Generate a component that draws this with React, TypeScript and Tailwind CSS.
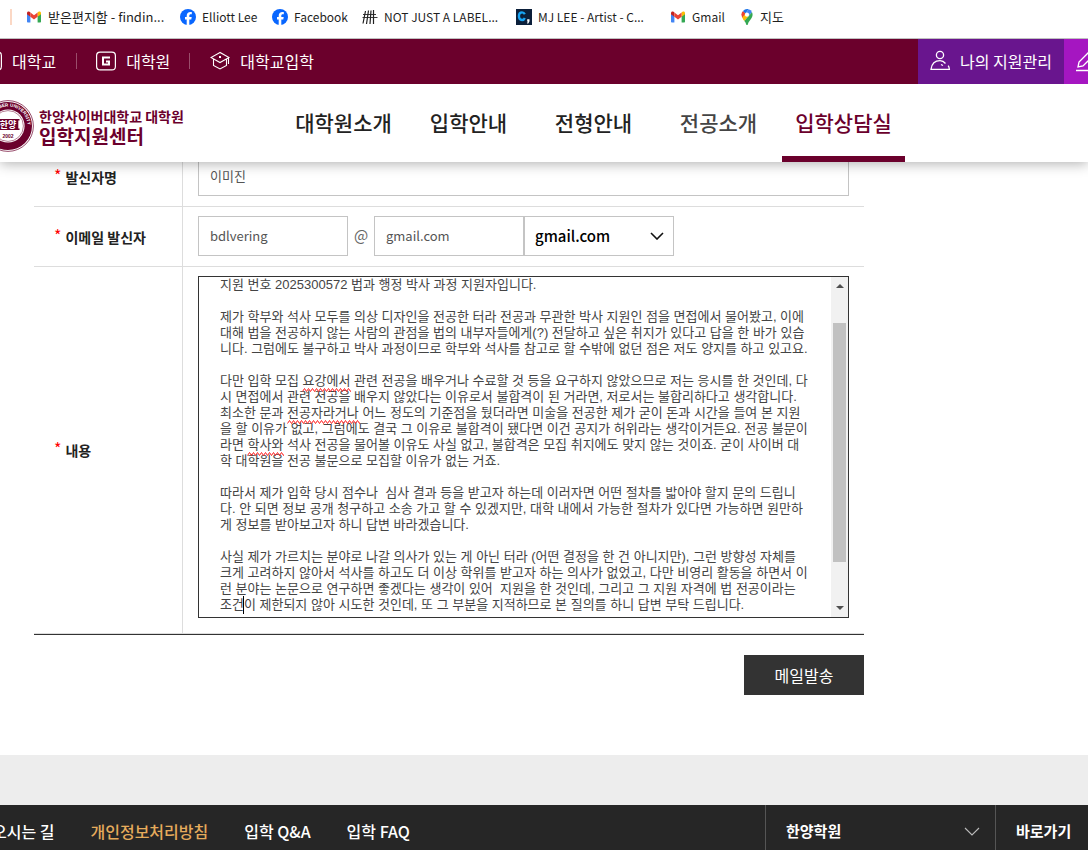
import type { ReactNode } from "react";
import clsx from "clsx";

const BOOKMARKS = [
  { label: "받은편지함 - findin...", icon: <GmailIcon />, width: "w-[154px] text-[13px]" },
  { label: "Elliott Lee", icon: <FacebookIcon />, width: "w-[92px] text-xs" },
  { label: "Facebook", icon: <FacebookIcon />, width: "w-[90px] text-xs" },
  { label: "NOT JUST A LABEL...", icon: <HashIcon />, width: "w-[154px] text-xs" },
  { label: "MJ LEE - Artist - C...", icon: <CargoIcon />, width: "w-[154px] text-xs" },
  { label: "Gmail", icon: <GmailIcon />, width: "w-[70px] text-xs" },
  { label: "지도", icon: <MapsIcon />, width: "w-[60px] text-[13px]" },
];

const MENU = ["대학원소개", "입학안내", "전형안내", "전공소개", "입학상담실"];

const MESSAGE = `지원 번호 2025300572 법과 행정 박사 과정 지원자입니다.

제가 학부와 석사 모두를 의상 디자인을 전공한 터라 전공과 무관한 박사 지원인 점을 면접에서 물어봤고, 이에
대해 법을 전공하지 않는 사람의 관점을 법의 내부자들에게(?) 전달하고 싶은 취지가 있다고 답을 한 바가 있습
니다. 그럼에도 불구하고 박사 과정이므로 학부와 석사를 참고로 할 수밖에 없던 점은 저도 양지를 하고 있고요.

다만 입학 모집 요강에서 관련 전공을 배우거나 수료할 것 등을 요구하지 않았으므로 저는 응시를 한 것인데, 다
시 면접에서 관련 전공을 배우지 않았다는 이유로서 불합격이 된 거라면, 저로서는 불합리하다고 생각합니다.
최소한 문과 전공자라거나 어느 정도의 기준점을 뒀더라면 미술을 전공한 제가 굳이 돈과 시간을 들여 본 지원
을 할 이유가 없고, 그럼에도 결국 그 이유로 불합격이 됐다면 이건 공지가 허위라는 생각이거든요. 전공 불문이
라면 학사와 석사 전공을 물어볼 이유도 사실 없고, 불합격은 모집 취지에도 맞지 않는 것이죠. 굳이 사이버 대
학 대학원을 전공 불문으로 모집할 이유가 없는 거죠.

따라서 제가 입학 당시 점수나  심사 결과 등을 받고자 하는데 이러자면 어떤 절차를 밟아야 할지 문의 드립니
다. 안 되면 정보 공개 청구하고 소송 가고 할 수 있겠지만, 대학 내에서 가능한 절차가 있다면 가능하면 원만하
게 정보를 받아보고자 하니 답변 바라겠습니다.

사실 제가 가르치는 분야로 나갈 의사가 있는 게 아닌 터라 (어떤 결정을 한 건 아니지만), 그런 방향성 자체를
크게 고려하지 않아서 석사를 하고도 더 이상 학위를 받고자 하는 의사가 없었고, 다만 비영리 활동을 하면서 이
런 분야는 논문으로 연구하면 좋겠다는 생각이 있어  지원을 한 것인데, 그리고 그 지원 자격에 법 전공이라는
조건이 제한되지 않아 시도한 것인데, 또 그 부분을 지적하므로 본 질의를 하니 답변 부탁 드립니다.`;

const FIELD = "h-10 border border-[#c4c4c4] bg-white px-[11px] pb-[2px] text-[13px] text-[#555] outline-none";

export default function App() {
  return (
    <div className="flex h-screen flex-col overflow-hidden bg-white font-['Noto_Sans_CJK_KR',sans-serif] text-[#222]">
      <BookmarkBar />
      <header className="relative z-10 shrink-0 bg-white shadow-[0_2px_12px_rgba(0,0,0,0.3)]">
        <TopBar />
        <MainMenu />
      </header>
      <main className="-mt-[15px] shrink-0 px-[34px] pb-[60px]">
        <MailForm />
      </main>
      <div className="h-[50px] shrink-0 bg-[#ededed]" />
      <Footer />
    </div>
  );
}

function BookmarkBar() {
  return (
    <nav className="relative z-20 flex h-[39px] shrink-0 items-center overflow-hidden border-b border-[#c0c0c0] bg-white pb-1 pl-[10px]">
      <span className="mr-[14px] h-4 w-[2px] shrink-0 bg-[#fbd8c5]" />
      {BOOKMARKS.map((b, i) => (
        <a key={i} href="#" className={clsx("flex shrink-0 items-center gap-[6px] whitespace-nowrap text-[#1f1f1f]", b.width)}>
          {b.icon}
          <span className="pb-px leading-5">{b.label}</span>
        </a>
      ))}
    </nav>
  );
}

function TopBar() {
  return (
    <div className="flex h-[45px] bg-[#6b002c] text-base text-white">
      <nav className="-ml-[18px] flex items-center pb-[2px]">
        <TopLink icon={<BoxIcon />}>대학교</TopLink>
        <span className="mr-[19px] ml-5 h-4 w-px bg-[#9a4d6b]" />
        <TopLink icon={<BoxIcon letter />}>대학원</TopLink>
        <span className="mr-5 ml-[19px] h-4 w-px bg-[#9a4d6b]" />
        <TopLink icon={<CapIcon />}>대학교입학</TopLink>
      </nav>
      <a href="#" className="ml-auto flex w-[146px] items-center gap-[9px] bg-[#69158e] pb-[2px] pl-[11px] whitespace-nowrap">
        <PersonIcon />
        나의 지원관리
      </a>
      <a href="#" aria-label="원서접수" className="flex w-6 items-center overflow-hidden bg-[#a516c1] pb-[2px] pl-[11px]">
        <PenIcon />
      </a>
    </div>
  );
}

function TopLink({ icon, children }: { icon: ReactNode; children: ReactNode }) {
  return (
    <a href="#" className="flex items-center gap-[10px] whitespace-nowrap">
      {icon}
      {children}
    </a>
  );
}

function MainMenu() {
  return (
    <div className="flex h-[78px]">
      <a href="#" className="flex w-[281px] shrink-0 items-center gap-[5px] overflow-hidden pt-[6px] font-bold text-[#6b002c]">
        <Seal />
        <span className="flex flex-col whitespace-nowrap">
          <span className="text-sm leading-5">한양사이버대학교 대학원</span>
          <span className="text-[19px] leading-5">입학지원센터</span>
        </span>
      </a>
      <nav className="flex gap-[2px] pl-px text-[21px] font-medium">
        {MENU.map((m) => (
          <a
            key={m}
            href="#"
            className={clsx(
              "flex w-[123px] items-center justify-center border-b-6 pt-[6px]",
              m === "입학상담실" ? "border-[#6b002c] text-[#6b002c]" : "border-transparent",
              m === "전공소개" && "text-[#444]",
            )}
          >
            {m}
          </a>
        ))}
      </nav>
    </div>
  );
}

function FormRow({ label, id, children }: { label: string; id: string; children: ReactNode }) {
  return (
    <tr>
      <th scope="row" className="w-[149px] border-r border-b border-[#ddd] pl-5 text-left align-middle text-sm font-bold">
        <label htmlFor={id} className="flex items-center gap-1">
          <span className="pb-1 text-base leading-5 font-normal text-[#f00]">*</span>
          {label}
        </label>
      </th>
      <td className="border-b border-[#ddd] px-[15px] pt-[9px] pb-[10px]">{children}</td>
    </tr>
  );
}

function MailForm() {
  return (
    <form className="w-full max-w-[830px]" onSubmit={(e) => e.preventDefault()}>
      <table className="w-full table-fixed border-separate border-spacing-0 border-b border-[#333]">
        <tbody>
          <FormRow label="발신자명" id="sender">
            <input id="sender" defaultValue="이미진" className={clsx(FIELD, "block w-full")} />
          </FormRow>
          <FormRow label="이메일 발신자" id="mail-id">
            <div className="flex items-center text-sm">
              <input id="mail-id" defaultValue="bdlvering" className={clsx(FIELD, "w-[150px]")} />
              <span className="w-[26px] pb-[2px] text-center text-[15px] text-[#666]">@</span>
              <input aria-label="이메일 도메인" defaultValue="gmail.com" className={clsx(FIELD, "w-[150px]")} />
              <div className="relative">
                <select
                  aria-label="도메인 선택"
                  className="block h-10 w-[150px] appearance-none border border-[#c4c4c4] bg-white px-[10px] text-[15px] font-medium text-black outline-none"
                >
                  <option>gmail.com</option>
                </select>
                <svg viewBox="0 0 14 8" className="pointer-events-none absolute top-4 right-[10px] h-2 w-[14px]" fill="none" stroke="#111" strokeWidth="1.6">
                  <path d="M1 1l6 6 6-6" />
                </svg>
              </div>
            </div>
          </FormRow>
          <FormRow label="내용" id="message">
            <MessageBox />
          </FormRow>
        </tbody>
      </table>
      <div className="mt-5 flex justify-end">
        <button type="submit" className="h-10 w-[120px] bg-[#333] text-base text-white">
          메일발송
        </button>
      </div>
    </form>
  );
}

function MessageBox() {
  return (
    <div className="relative mb-[5px] flex h-[342px] border border-[#333]">
      <textarea
        id="message"
        spellCheck={false}
        defaultValue={MESSAGE}
        className="block min-w-0 flex-1 resize-none overflow-hidden bg-transparent pl-[21px] font-['Liberation_Sans','Noto_Sans_CJK_KR',sans-serif] text-[13px] leading-4 whitespace-pre text-[#444] outline-none"
      />
      <div aria-hidden="true" className="flex w-[17px] flex-col items-center bg-[#f1f1f1] py-[7px]">
        <ScrollArrow />
        <span className="mt-[35px] h-[239px] w-[13px] bg-[#c1c1c1]" />
        <ScrollArrow down />
      </div>
      {/* spelling marks and the text caret */}
      <Squiggle className="absolute top-[111px] left-[103px] h-1 w-[49px]" />
      <Squiggle className="absolute top-[143px] left-[88px] h-1 w-[73px]" />
      <Squiggle className="absolute top-[175px] left-[48px] h-1 w-[37px]" />
      <span className="absolute top-[319px] left-[44px] h-[18px] w-px bg-black" />
    </div>
  );
}

function ScrollArrow({ down }: { down?: boolean }) {
  return (
    <svg viewBox="0 0 8 4" className={clsx("h-1 w-2 shrink-0", down && "mt-auto")} fill="#505050">
      <path d={down ? "M0 0h8L4 4z" : "M0 4h8L4 0z"} />
    </svg>
  );
}

function Squiggle({ className }: { className: string }) {
  const points = Array.from({ length: 38 }, (_, i) => `${i * 2 + 0.5},${i % 2 ? 0.5 : 3.5}`).join(" ");
  return (
    <svg className={clsx("pointer-events-none", className)} fill="none" stroke="#f22" strokeWidth="1" aria-hidden="true">
      <polyline points={points} />
    </svg>
  );
}

function Footer() {
  return (
    <footer className="flex h-[52px] shrink-0 bg-[#262626] font-medium text-white">
      <nav className="-ml-2 flex items-center gap-9 whitespace-nowrap">
        <a href="#">오시는 길</a>
        <a href="#" className="text-[#e5ab5c]">개인정보처리방침</a>
        <a href="#">입학 Q&amp;A</a>
        <a href="#">입학 FAQ</a>
      </nav>
      <button type="button" className="ml-auto flex w-[230px] items-center justify-between border-l border-[#555] pr-[15px] pl-5 text-[15px] font-bold">
        한양학원
        <svg viewBox="0 0 16 9" className="h-[9px] w-4" fill="none" stroke="#bbb" strokeWidth="1.1">
          <path d="M1 1l7 7 7-7" />
        </svg>
      </button>
      <a href="#" className="flex w-[93px] items-center border-l border-[#555] pl-5 text-[15px] font-bold whitespace-nowrap">
        바로가기
      </a>
    </footer>
  );
}

function Seal() {
  return (
    <svg viewBox="0 0 52 52" className="-ml-[18px] size-[52px] shrink-0" aria-hidden="true">
      <defs>
        <path id="seal-top" d="M8.600 35A19.600 19.600 0 1 1 45.600 27.500" />
        <path id="seal-bottom" d="M46 38A23 23 0 0 1 10 42.500" />
      </defs>
      <circle cx="26" cy="26" r="25.400" fill="#fff" stroke="#6b002c" strokeWidth="0.7" />
      <circle cx="26" cy="26" r="24" fill="#6b002c" />
      <circle cx="26" cy="26" r="16.600" fill="#fff" />
      <circle cx="26" cy="26" r="15.400" fill="none" stroke="#6b002c" strokeWidth="0.5" />
      <text fill="#fff" fontSize="4.600" fontWeight="700" fontFamily="Liberation Sans, sans-serif">
        <textPath href="#seal-top">HANYANG CYBER UNIVERSITY</textPath>
      </text>
      <path d="M14.500 19h23v1.600h-1.200v7.800h1.200V30h-23v-1.600h1.200v-7.800h-1.200z" fill="#6b002c" />
      <text x="26" y="28" textAnchor="middle" fill="#fff" fontSize="9" fontWeight="700">한양</text>
      <text x="26" y="37.500" textAnchor="middle" fill="#6b002c" fontSize="5" fontWeight="700" fontFamily="Liberation Sans, sans-serif">2002</text>
    </svg>
  );
}

function GmailIcon() {
  return (
    <svg viewBox="0 0 16 16" className="size-4 shrink-0">
      <path d="M1 4v8.4c0 .6.5 1 1 1h2.4V7.2z" fill="#4285f4" />
      <path d="M15 4v8.4c0 .6-.5 1-1 1h-2.4V7.2z" fill="#34a853" />
      <path d="M11.6 3.6v4.2L15 5.2V4c0-1.5-1.5-2-2.5-1.2z" fill="#fbbc04" />
      <path d="M1 4v1.2l3.4 2.6V3.6l-.9-.8C2.5 2 1 2.5 1 4z" fill="#c5221f" />
      <path d="M4.4 3.6v4.2L8 10.4l3.6-2.6V3.6L8 6.3z" fill="#ea4335" />
    </svg>
  );
}

function FacebookIcon() {
  return (
    <svg viewBox="0 0 16 16" className="size-4 shrink-0">
      <circle cx="8" cy="8" r="8" fill="#0866ff" />
      <path d="M6.7 15.9v-5.4H5V8h1.7V6.9c0-2.8 1.3-4 3.9-4 .5 0 .9 0 1.2.1v2.2h-.9c-1.3 0-1.6.5-1.6 1.7V8h2.4l-.4 2.5h-2v5.4z" fill="#fff" />
    </svg>
  );
}

function HashIcon() {
  return (
    <svg viewBox="0 0 16 16" className="size-4 shrink-0" fill="none" stroke="#222">
      <path d="M3.500 2L1 14.500M6.500 1.500L4.500 15M9 1.500L8 15M11.500 1v14" strokeWidth="1.200" />
      <path d="M1 5.500h13M.5 8.500h15" strokeWidth="0.900" />
    </svg>
  );
}

function CargoIcon() {
  return (
    <svg viewBox="0 0 16 16" className="size-4 shrink-0">
      <path d="M0 0h16v16H0z" fill="#0b1f3a" />
      <path d="M8.8 5.2C8.2 3.9 7.3 3.3 6 3.3 4 3.3 2.9 4.8 2.9 7.1c0 2.400 1.100 3.900 3.100 3.900 1.300 0 2.300-.7 2.800-2" fill="none" stroke="#18a5f5" strokeWidth="2.300" />
      <path d="M11.200 10.200h2.300v2l-1.200 2.200h-1.300l.7-2h-.5z" fill="#fff" />
    </svg>
  );
}

function MapsIcon() {
  return (
    <svg viewBox="2 0 12 16" className="h-4 w-[14px] shrink-0">
      <path d="M2.400 5.600A5.600 5.600 0 0 1 4 2.100L7 4.600 3.700 9C2.900 7.900 2.400 6.800 2.400 5.600z" fill="#ea4335" />
      <path d="M4 2.100A5.600 5.600 0 0 1 9.700.3L6.400 4.500z" fill="#1a73e8" />
      <path d="M9.700.3a5.600 5.600 0 0 1 3.300 2.900L9.600 7.100 6.700 4.300z" fill="#4285f4" />
      <path d="M3.300 8.400L6.500 4.600l3.200 2.600-4.400 4.900C4.500 10.900 3.800 9.900 3.300 8.400z" fill="#fbbc04" />
      <path d="M13 3.200c1.300 3 .3 5.300-1.600 7.500C9.700 12.800 9.200 14 8.800 15.400c-.2.800-1.300.8-1.600 0-.4-1.300-.9-2.300-1.900-3.400z" fill="#34a853" />
      <circle cx="8" cy="5.700" r="2.100" fill="#fff" />
    </svg>
  );
}

function BoxIcon({ letter }: { letter?: boolean }) {
  return (
    <svg viewBox="0 0 20 20" className="size-5 shrink-0" fill="none" stroke="#fff">
      <rect x="0.6" y="1.100" width="18.800" height="17.800" rx="3.500" strokeWidth="1.200" />
      {letter && <path d="M14 6.500H7v7h6v-3h-3" strokeWidth="2" />}
    </svg>
  );
}

function CapIcon() {
  return (
    <svg viewBox="0 0 20 20" className="size-5 shrink-0" fill="none" stroke="#fff" strokeWidth="1.100">
      <path d="M10 1.500L1 6.500l9 5 9-5zM3.500 8v6.500L10 18l6.500-3.500V8M18.500 7v6" />
      <path d="M9 6h2" strokeWidth="2" />
    </svg>
  );
}

function PersonIcon() {
  return (
    <svg viewBox="0 0 22 22" className="size-[22px] shrink-0" fill="none" stroke="#fff" strokeWidth="1.300">
      <circle cx="11" cy="5" r="3.600" />
      <path d="M16.500 13.500C15 11.600 13 10.700 11 10.700c-4.500 0-8.200 3-9 8.600h18.400c0-1.300-.5-2.500-1.200-3.700M12 14.500l2 1" />
    </svg>
  );
}

function PenIcon() {
  return (
    <svg viewBox="0 0 22 22" className="size-[22px] shrink-0" fill="none" stroke="#fff" strokeWidth="1.300">
      <path d="M3 17l1-5L14 2l4 4L8 16zM1 20.500h20" />
    </svg>
  );
}
